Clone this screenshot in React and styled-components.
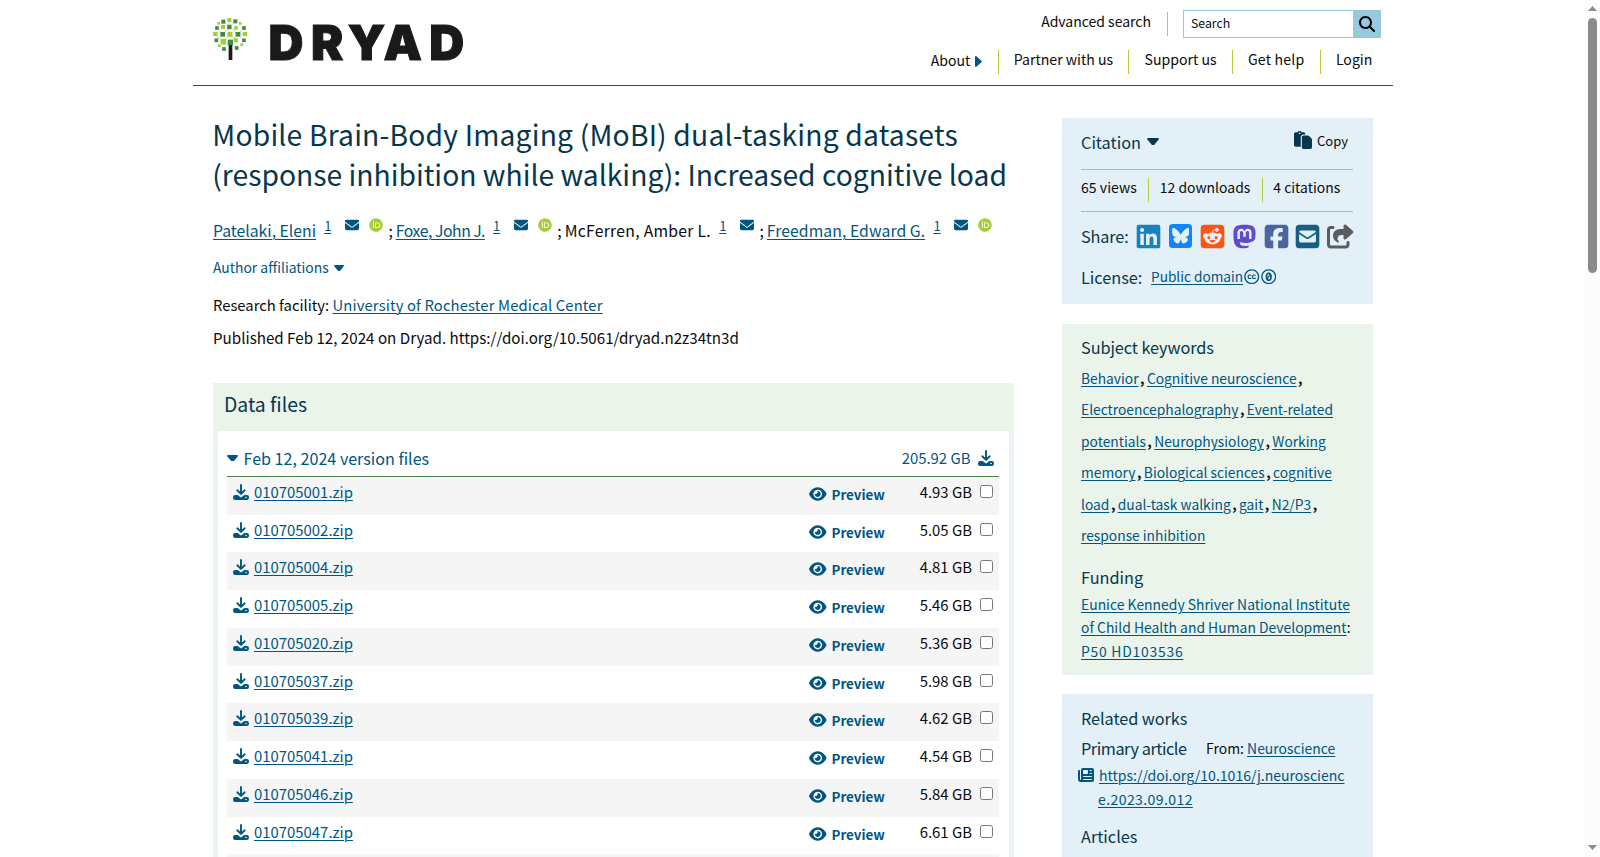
import React from 'react';
import styled, { createGlobalStyle } from 'styled-components';
import {
  FaBluesky,
  FaCreativeCommons,
  FaCreativeCommonsZero,
  FaEnvelope,
  FaEye,
  FaLinkedin,
  FaMagnifyingGlass,
  FaMastodon,
  FaNewspaper,
  FaOrcid,
  FaPaste,
  FaShareFromSquare,
  FaSquareEnvelope,
  FaSquareFacebook,
  FaSquareReddit,
} from 'react-icons/fa6';

const color = {
  ink: '#0b0b0b',
  heading: '#06374d',
  link: '#005581',
  lime: '#abd03f',
  blueBox: '#e3f0f7',
  greenBox: '#eaf4eb',
  search: '#98c9e0',
};

const GlobalStyle = createGlobalStyle`
  * { box-sizing: border-box; }
  html, body { margin: 0; height: 857px; overflow: hidden; background: #fff; }
  body {
    font-family: "Noto Sans CJK SC", "Noto Sans", sans-serif;
    font-size: 14px;
    color: ${color.ink};
  }
  svg { display: block; flex: none; }
`;

const Viewport = styled.div`
  display: flex;
  height: 857px;
  overflow: hidden;
`;
const Page = styled.div`
  width: 1585px;
  padding-left: 193px;
`;
const Scrollbar = styled.div`
  width: 15px;
  display: flex;
  flex-direction: column;
  align-items: center;
  padding: 6px 0 7px;
  background: #fcfcfc;
`;
const Thumb = styled.div`
  width: 9px;
  height: 255px;
  margin: 7px 0 auto;
  border-radius: 5px;
  background: #8b8b8b;
`;

/* ---------- header ---------- */
const Header = styled.header`
  width: 1200px;
  height: 86px;
  display: flex;
  justify-content: space-between;
  padding: 10px 12px 0 20px;
  border-bottom: 1px solid #444;
`;
const HeaderRight = styled.div`
  display: flex;
  flex-direction: column;
  align-items: flex-end;
`;
const SearchRow = styled.div`
  display: flex;
  height: 28px;
`;
const NavRow = styled.nav`
  display: flex;
  margin: 12px -6.5px 0 0;
`;
const NavItem = styled.a`
  display: flex;
  align-items: center;
  height: ${(p) => (p.$tall ? 25 : 24)}px;
  padding: 0 15.2px;
  font-size: 14.1px;
  line-height: 20px;
  padding-bottom: ${(p) => (p.$tall ? 5 : 6)}px;
  letter-spacing: ${(p) => p.$ls || 0}px;
  & + & { border-left: 1px solid ${color.lime}; }
  svg { margin-left: 5px; margin-top: 2px; }
`;
const AdvancedLink = styled.a`
  height: 24px;
  margin: 2px 15px 0 0;
  padding-right: 16px;
  border-right: 1px solid ${color.lime};
  font-size: 14px;
  line-height: 18px;
`;
const SearchField = styled.div`
  display: flex;
  width: 198px;
  border: 1px solid ${color.search};
  font-size: 12.3px;
  line-height: 25px;
  padding-left: 7px;
  justify-content: space-between;
`;
const SearchButton = styled.button`
  width: 28px;
  height: 28px;
  margin: -1px;
  border: 0;
  padding: 0 0 0 6px;
  display: flex;
  align-items: center;
  font-size: 16px;
  color: #000;
  background: ${color.search};
`;

/* ---------- main column ---------- */
const Columns = styled.main`
  display: flex;
  gap: 48px;
  padding-left: 20px;
`;
const Article = styled.div`
  width: 801px;
  padding-top: 28px;
`;
const Title = styled.h1`
  margin: 0 0 22px -0.7px;
  font-size: 28.27px;
  font-weight: 400;
  line-height: 40px;
  color: ${color.heading};
  white-space: nowrap;
`;
const TitleLine = styled.span`
  display: block;
  letter-spacing: ${(p) => p.$ls || 0}px;
`;
const Link = styled.a`
  color: ${color.link};
  text-decoration: underline;
  text-decoration-thickness: 1px;
  text-underline-offset: 2px;
  letter-spacing: ${(p) => p.$ls || 0}px;
`;
const Authors = styled.div`
  display: flex;
  height: 30px;
  font-size: 15.75px;
  line-height: 30px;
  white-space: nowrap;
`;
const Author = styled.span`
  display: flex;
  margin-right: 3px;
`;
const PlainName = styled.span`
  letter-spacing: 0.27px;
`;
const AffiliationMark = styled(Link)`
  margin: -5px 13.5px 0 8.2px;
  font-size: 13px;
`;
const AuthorIcon = styled.span`
  margin-right: ${(p) => (p.$last ? 5.5 : 10)}px;
  padding-top: 2px;
  color: ${(p) => p.$fill || color.link};
  font-size: 14px;
`;
const Affiliations = styled.a`
  display: flex;
  align-items: center;
  gap: 5px;
  height: 24px;
  margin: 9px 0 9.6px;
  font-size: 13.9px;
  line-height: 24px;
  color: ${color.link};
  svg { margin-top: 2px; }
`;
const Detail = styled.div`
  height: 32px;
  font-size: ${(p) => p.$size}px;
  line-height: 32px;
`;

const FilesPanel = styled.section`
  margin-top: 30.4px;
  height: 500px;
  padding: 0 5px;
  background: ${color.greenBox};
`;
const FilesTitle = styled.h2`
  margin: 0;
  height: 48px;
  padding-left: 6px;
  font-size: 19.4px;
  font-weight: 400;
  line-height: 41px;
  color: ${color.heading};
`;
const FilesBody = styled.div`
  padding: 0 10px 0 9px;
  background: #fff;
`;
const VersionRow = styled.div`
  display: flex;
  align-items: center;
  height: 46px;
  padding: 10px 5px 1px 0;
  border-bottom: 1px solid #4b8048;
  color: ${color.link};
  font-size: 16.1px;
  line-height: 34px;
  gap: 5.5px;
`;
const VersionSize = styled.span`
  margin-left: auto;
  padding-right: 2px;
  font-size: 14.9px;
`;
const FileRow = styled.div`
  display: flex;
  height: 37.75px;
  padding: 3px 6px 0;
  font-size: 14.9px;
  line-height: 24px;
  background: ${(p) => (p.$shade ? '#f5f5f5' : '#fff')};
`;
const FileLink = styled.span`
  display: flex;
  gap: 5px;
  width: 576px;
  color: ${color.link};
  svg { margin-top: 4px; }
`;
const Preview = styled.span`
  display: flex;
  gap: 5px;
  padding-top: 2px;
  font-size: 13.4px;
  font-weight: 700;
  color: ${color.link};
  svg { margin-top: 1px; font-size: 17.5px; height: 22px; }
`;
const FileSize = styled.span`
  margin: 0 8px 0 auto;
`;
const Checkbox = styled.input`
  width: 13px;
  height: 13px;
  margin: 5px 0 0;
`;

/* ---------- side column ---------- */
const Side = styled.aside`
  width: 311px;
  padding-top: 32px;
`;
const Box = styled.section`
  height: ${(p) => p.$h}px;
  margin-bottom: ${(p) => p.$gap}px;
  padding: ${(p) => p.$pt}px 10px 0 19px;
  overflow: hidden;
  background: ${(p) => (p.$green ? color.greenBox : color.blueBox)};
`;
const Heading = styled.h3`
  margin: 0;
  height: 28px;
  font-size: 16.3px;
  font-weight: 400;
  line-height: 28px;
  color: ${color.heading};
  letter-spacing: ${(p) => p.$ls || 0}px;
`;
const CitationRow = styled.div`
  display: flex;
  align-items: center;
  width: 272px;
  height: 52px;
  padding-bottom: 4px;
  border-bottom: 1px solid ${color.lime};
  color: ${color.heading};
  gap: 6px;
`;
const CopyButton = styled.span`
  display: flex;
  align-items: center;
  gap: 5px;
  margin: -4px 5px 0 auto;
  font-size: 18px;
`;
const CopyLabel = styled.span`
  margin-top: 3px;
  color: ${color.ink};
  font-size: 13px;
  line-height: 20px;
`;
const Stats = styled.div`
  display: flex;
  width: 272px;
  height: 42px;
  padding-top: 8px;
  border-bottom: 1px solid ${color.lime};
  line-height: 18px;
  white-space: nowrap;
`;
const Stat = styled.span`
  height: 24px;
  padding-right: 11.5px;
  font-size: 14.1px;
  & + & { border-left: 1px solid ${color.lime}; padding-left: 10.5px; font-size: 13.95px; }
`;
const ShareRow = styled.div`
  display: flex;
  width: 272px;
  height: 24px;
  margin-top: 12px;
  align-items: center;
  justify-content: space-between;
`;
const ShareIcon = styled.span`
  display: flex;
  width: ${(p) => p.$w || 23.6}px;
  height: 27px;
  align-items: center;
  justify-content: center;
  font-size: 27px;
  color: ${(p) => p.$fill};
`;
const BlueskyTile = styled.span`
  display: flex;
  width: 23.6px;
  height: 23.6px;
  align-items: center;
  justify-content: center;
  border-radius: 3.5px;
  background: #1185fe;
  color: ${color.blueBox};
  font-size: 17.5px;
`;
const LicenseRow = styled.div`
  display: flex;
  height: 28px;
  margin-top: 14.5px;
  font-size: 13.65px;
  line-height: 27px;
  color: ${color.link};
  gap: 1px;
  svg { font-size: 15.5px; margin-top: 6.3px; }
  h3 { width: 69px; }
`;
const Keywords = styled.div`
  padding-top: 2px;
  margin-bottom: 12px;
  font-size: 13.8px;
  line-height: 31.4px;
`;
const Comma = styled.b`
  margin-left: 1.5px;
  letter-spacing: -0.4px;
`;
const KeywordLine = styled.div`
  white-space: nowrap;
`;
const Funding = styled.div`
  padding-top: 1.5px;
  font-size: 13.92px;
  line-height: 23.5px;
  white-space: nowrap;
`;
const WorkHead = styled.div`
  display: flex;
  align-items: center;
  gap: 19.5px;
  height: 31px;
  font-size: 13.95px;
`;
const WorkLink = styled.div`
  display: flex;
  gap: 5px;
  margin-left: -3px;
  height: 59px;
  font-size: 14.05px;
  line-height: 24px;
  color: ${color.link};
  svg { margin-top: 4px; font-size: 16px; }
`;
const SecondLine = styled.span`
  display: block;
  margin-left: -1px;
`;

const Caret = ({ size = 11 }) => (
  <svg width={size} height={size * 0.62} viewBox="0 0 12 8" fill="currentColor" preserveAspectRatio="none">
    <path d="M1 0h10c.9 0 1.300 1.100.6 1.700L7.300 7.300c-.8.8-1.800.8-2.600 0L.4 1.700C-.3 1.100.1 0 1 0z" />
  </svg>
);
const CaretRight = () => (
  <svg width="7" height="11" viewBox="0 0 7 11" fill={color.link}>
    <path d="M0 1c0-.9 1-1.300 1.600-.6l4.800 4.300c.5.5.5 1.100 0 1.600l-4.800 4.300C1 11.300 0 10.900 0 10z" />
  </svg>
);
const Download = () => (
  <svg width="16" height="16" viewBox="0 0 16 16">
    <path d="M8 1v8.500M4.300 6.300l3.700 3.600 3.700-3.600" fill="none" stroke="currentColor" strokeWidth="1.900" strokeLinecap="round" strokeLinejoin="round" />
    <path
      fill="currentColor"
      fillRule="evenodd"
      d="M2.200 11h2.400L8 13.400l3.400-2.400h2.400a2.200 2.200 0 0 1 2.200 2.200v.6a2.200 2.200 0 0 1-2.200 2.200H2.200A2.200 2.200 0 0 1 0 13.800v-.6A2.200 2.200 0 0 1 2.200 11zM13 12.700a.8.8 0 1 0 0 1.600.8.8 0 0 0 0-1.600z"
    />
  </svg>
);

const D = '#3f8b41';
const L = '#a3cd39';
const leaves = [
  [73, 30, 12, L], [41, 40, 8, L], [106, 40, 8, L], [55, 35, 12, D], [91, 34, 12, D],
  [36, 54, 11, D], [54, 51, 12, L], [73, 51, 13, D], [93, 54, 11, L], [117, 54, 11, D],
  [31, 72, 13, L], [53, 73, 14, D], [75, 73, 15, L], [99, 73, 14, D], [120, 72, 13, L],
  [34, 91, 11, D], [55, 95, 17, L], [76, 97, 16, D], [93, 91, 12, L], [117, 91, 11, D],
  [43, 107, 8, L], [57, 117, 11, D], [95, 114, 11, D], [110, 104, 8, L],
];
const Logo = () => (
  <svg width="270" height="66" viewBox="213 10 270 66">
    <g transform="translate(205 10) scale(.3333)">
      <path
        d="M73 30v21L55 35M91 34 73 51M36 54l17 19 22-22 24 22 18-19M31 72l24 23 20-22 24 22M120 72 99 73 76 97l19 17M34 91l19-18M117 91 99 73M76 97l-19 20"
        fill="none"
        stroke="#b9cfae"
        strokeWidth="2.500"
      />
      {leaves.map(([x, y, s, f]) => (
        <rect key={`${x}-${y}`} x={x - s / 2} y={y - s / 2} width={s} height={s} fill={f} />
      ))}
      <rect x="71" y="105" width="11" height="45" fill="#1a1a1a" />
    </g>
    <text
      x="268.500 311 347.800 383.500 429.300"
      y="59.500"
      fontFamily="Inter, sans-serif"
      fontWeight="900"
      fontSize="48.400"
      fill="#1a1a1a"
      stroke="#1a1a1a"
      strokeWidth="1"
    >
      DRYAD
    </text>
  </svg>
);

const Person = ({ name, linked = true, ls, orcid = true, end }) => (
  <Author>
    {linked ? <Link $ls={ls}>{name}</Link> : <PlainName>{name}</PlainName>}
    <AffiliationMark>1</AffiliationMark>
    <AuthorIcon $last={!orcid}><FaEnvelope /></AuthorIcon>
    {orcid && <AuthorIcon $last $fill="#a6ce39"><FaOrcid /></AuthorIcon>}
    {!end && ';'}
  </Author>
);

const files = [
  ['010705001.zip', '4.93 GB'],
  ['010705002.zip', '5.05 GB'],
  ['010705004.zip', '4.81 GB'],
  ['010705005.zip', '5.46 GB'],
  ['010705020.zip', '5.36 GB'],
  ['010705037.zip', '5.98 GB'],
  ['010705039.zip', '4.62 GB'],
  ['010705041.zip', '4.54 GB'],
  ['010705046.zip', '5.84 GB'],
  ['010705047.zip', '6.61 GB'],
  ['', ''],
];

const keywordLines = [
  ['Behavior', 'Cognitive neuroscience'],
  ['Electroencephalography', 'Event-related'],
  ['potentials', 'Neurophysiology', 'Working'],
  ['memory', 'Biological sciences', 'cognitive'],
  ['load', 'dual-task walking', 'gait', 'N2/P3'],
  ['response inhibition'],
];
const unbroken = ['Event-related', 'Working', 'cognitive', 'response inhibition'];

export default function App() {
  return (
    <Viewport>
      <GlobalStyle />
      <Page>
        <Header>
          <Logo />
          <HeaderRight>
            <SearchRow>
              <AdvancedLink>Advanced search</AdvancedLink>
              <SearchField>
                Search
                <SearchButton><FaMagnifyingGlass /></SearchButton>
              </SearchField>
            </SearchRow>
            <NavRow>
              <NavItem $tall>About<CaretRight /></NavItem>
              <NavItem>Partner with us</NavItem>
              <NavItem>Support us</NavItem>
              <NavItem $ls={0.2}>Get help</NavItem>
              <NavItem>Login</NavItem>
            </NavRow>
          </HeaderRight>
        </Header>
        <Columns>
          <Article>
            <Title>
              <TitleLine $ls={0.18}>Mobile Brain-Body Imaging (MoBI) dual-tasking datasets</TitleLine>
              <TitleLine>(response inhibition while walking): Increased cognitive load</TitleLine>
            </Title>
            <Authors>
              <Person name="Patelaki, Eleni" />
              <Person name="Foxe, John J." ls={-0.45} />
              <Person name="McFerren, Amber L." linked={false} orcid={false} />
              <Person name="Freedman, Edward G." ls={0.07} end />
            </Authors>
            <Affiliations>Author affiliations<Caret size={10} /></Affiliations>
            <Detail $size={14.8}>Research facility: <Link $ls={0.14}>University of Rochester Medical Center</Link></Detail>
            <Detail $size={15.17}>Published Feb 12, 2024 on Dryad. https://doi.org/10.5061/dryad.n2z34tn3d</Detail>
            <FilesPanel>
              <FilesTitle>Data files</FilesTitle>
              <FilesBody>
                <VersionRow>
                  <Caret />
                  Feb 12, 2024 version files
                  <VersionSize>205.92 GB</VersionSize>
                  <Download />
                </VersionRow>
                {files.map(([name, size], i) => (
                  <FileRow key={name} $shade={i % 2 === 0}>
                    {name && (
                      <>
                        <FileLink><Download /><Link>{name}</Link></FileLink>
                        <Preview><FaEye />Preview</Preview>
                        <FileSize>{size}</FileSize>
                        <Checkbox type="checkbox" />
                      </>
                    )}
                  </FileRow>
                ))}
              </FilesBody>
            </FilesPanel>
          </Article>
          <Side>
            <Box $h={186} $gap={20} $pt={0}>
              <CitationRow>
                <Heading>Citation</Heading>
                <Caret size={12} />
                <CopyButton><FaPaste /><CopyLabel>Copy</CopyLabel></CopyButton>
              </CitationRow>
              <Stats>
                <Stat>65 views</Stat>
                <Stat>12 downloads</Stat>
                <Stat>4 citations</Stat>
              </Stats>
              <ShareRow>
                <Heading $ls={-0.15}>Share:</Heading>
                <ShareIcon $fill="#1782bb"><FaLinkedin /></ShareIcon>
                <BlueskyTile><FaBluesky /></BlueskyTile>
                <ShareIcon $fill="#ff5414"><FaSquareReddit /></ShareIcon>
                <ShareIcon $fill="#6349cc"><FaMastodon /></ShareIcon>
                <ShareIcon $fill="#4a66a0"><FaSquareFacebook /></ShareIcon>
                <ShareIcon $fill="#155f85"><FaSquareEnvelope /></ShareIcon>
                <ShareIcon $fill="#5c5c5c" $w={25}><FaShareFromSquare /></ShareIcon>
              </ShareRow>
              <LicenseRow>
                <Heading>License:</Heading>
                <Link>Public domain</Link>
                <FaCreativeCommons />
                <FaCreativeCommonsZero />
              </LicenseRow>
            </Box>
            <Box $h={351} $gap={19} $pt={9} $green>
              <Heading $ls={-0.07}>Subject keywords</Heading>
              <Keywords>
                {keywordLines.map((line) => (
                  <KeywordLine key={line[0]}>
                    {line.map((word) => (
                      <React.Fragment key={word}>
                        <Link>{word}</Link>
                        {!unbroken.includes(word) && <Comma>, </Comma>}
                      </React.Fragment>
                    ))}
                  </KeywordLine>
                ))}
              </Keywords>
              <Heading>Funding</Heading>
              <Funding>
                <Link>Eunice Kennedy Shriver National Institute<br />of Child Health and Human Development</Link>:
                <br />
                <Link $ls={0.75}>P50 HD103536</Link>
              </Funding>
            </Box>
            <Box $h={200} $gap={0} $pt={10}>
              <Heading $ls={-0.07}>Related works</Heading>
              <WorkHead>
                <Heading $ls={-0.45}>Primary article</Heading>
                <span>From: <Link>Neuroscience</Link></span>
              </WorkHead>
              <WorkLink>
                <FaNewspaper />
                <span>
                  <Link>https://doi.org/10.1016/j.neuroscienc</Link>
                  <SecondLine><Link $ls={0.4}>e.2023.09.012</Link></SecondLine>
                </span>
              </WorkLink>
              <Heading>Articles</Heading>
            </Box>
          </Side>
        </Columns>
      </Page>
      <Scrollbar>
        <svg width="9" height="5" viewBox="0 0 9 5" fill="#8b8b8b"><path d="M4.500 0 9 5H0z" /></svg>
        <Thumb />
        <svg width="9" height="5" viewBox="0 0 9 5" fill="#8b8b8b"><path d="M4.500 5 9 0H0z" /></svg>
      </Scrollbar>
    </Viewport>
  );
}
